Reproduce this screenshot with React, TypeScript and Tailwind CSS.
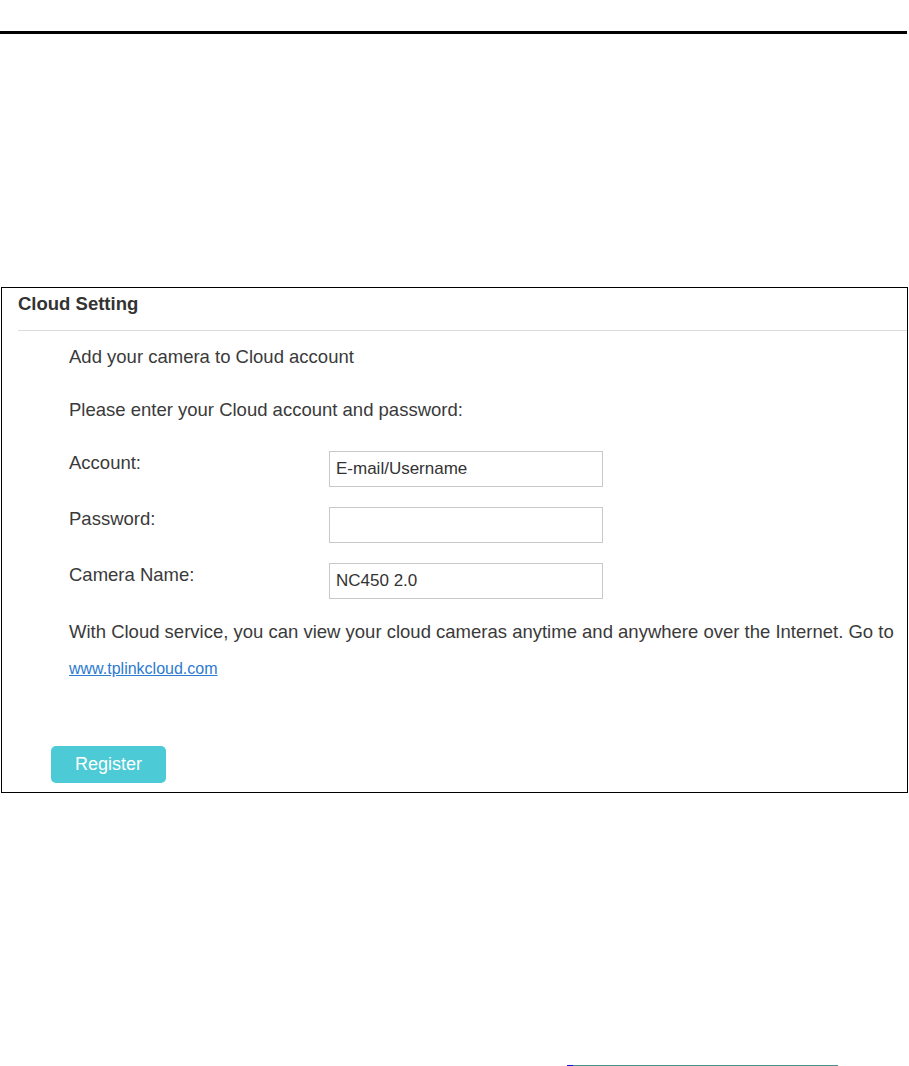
import React from 'react';

const font = { fontFamily: '"Liberation Sans", Arial, sans-serif' };

function Field({ label, value }: { label: string; value: string }) {
  return (
    <div className="flex items-start">
      <div className="w-[260px] text-[18.5px] leading-[24px]">{label}</div>
      <input
        readOnly
        value={value}
        className="h-[36px] w-[274px] border border-[#c8c8c8] bg-white px-[6px] text-[17px] text-[#333] outline-none"
      />
    </div>
  );
}

export default function App() {
  return (
    <div className="min-h-[1066px] w-[909px] bg-white pt-[31px] text-[#3a3a3a]" style={font}>
      <div className="h-[3px] w-[907px] bg-black" />

      <div className="mt-[253px] ml-px w-[907px] border border-black">
        <div className="h-[42px] pl-[16px] pt-[4px] text-[18.5px] font-bold leading-[24px] text-[#333]">
          Cloud Setting
        </div>
        <div className="ml-[16px] border-b border-[#dcdcdc]" />

        <div className="pl-[67px]">
          <p className="mt-[14px] text-[18.5px] leading-[24px]">Add your camera to Cloud account</p>
          <p className="mt-[29px] text-[18.5px] leading-[24px]">Please enter your Cloud account and password:</p>

          <div className="mt-[29px] flex flex-col gap-[20px]">
            <Field label="Account:" value="E-mail/Username" />
            <Field label="Password:" value="" />
            <Field label="Camera Name:" value="NC450 2.0" />
          </div>

          <p className="mt-[21px] whitespace-nowrap text-[18.5px] leading-[24px]">
            With Cloud service, you can view your cloud cameras anytime and anywhere over the Internet. Go to
          </p>
          <a href="#" className="mt-[13px] block w-fit text-[16px] leading-[24px] text-[#2b7bd0] underline">
            www.tplinkcloud.com
          </a>
        </div>

        <div className="mt-[65px] pb-[9px] pl-[49px]">
          <button className="h-[37px] w-[115px] rounded-[5px] bg-[#4ccad6] text-[18px] text-white">
            Register
          </button>
        </div>
      </div>

      <div className="mt-[272px] ml-[567px] flex h-px w-[271px]">
        <div className="w-[6px] bg-[#1010e0]" />
        <div className="flex-1 bg-[#4a9090]" />
      </div>
    </div>
  );
}
